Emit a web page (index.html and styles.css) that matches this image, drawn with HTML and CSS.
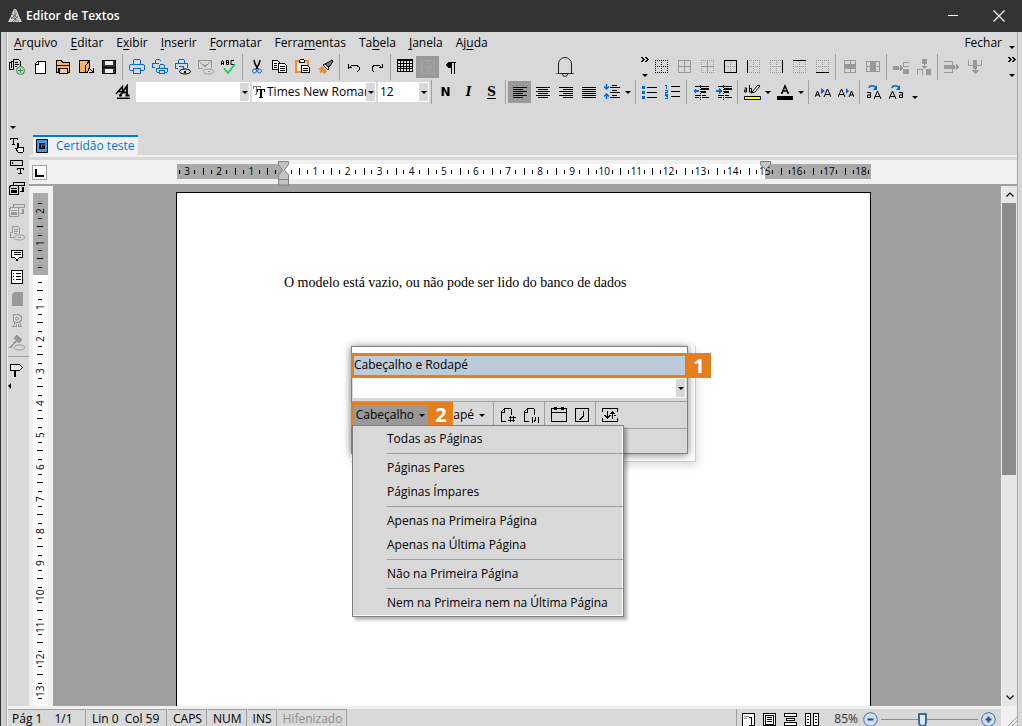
FILE: index.html
```
<!DOCTYPE html>
<html lang="pt-BR">
<head>
	<meta charset="UTF-8">
	<meta name="viewport" content="width=device-width,initial-scale=1.0">
	<title>Editor de Textos</title>
	<link rel="stylesheet" href="styles.css">
</head>
<body>
	<div class="window">
		<header class="titlebar">
			<svg class="logo" width="14" height="14" viewBox="0 0 14 14"><path d="M6 0h2l2 4 1 3 3 6H0l3-6 1-3z" fill="#d0d0d0"/><path d="M4 5l6 4M3 8l8 4M9 4l-6 6M10 7l-6 6M7 1v12" stroke="#555" stroke-width=".7"/></svg>
			<h1>Editor de Textos</h1>
			<button class="winbtn" aria-label="Minimizar"><svg width="12" height="12"><path d="M1 5.5h10" stroke="#fff"/></svg></button>
			<button class="winbtn" aria-label="Fechar janela"><svg width="12" height="12"><path d="M.5.5l11 11M11.5.5l-11 11" stroke="#fff" stroke-width="1.2"/></svg></button>
		</header>

		<div class="frame">
			<nav class="menubar">
				<a href="#"><u>A</u>rquivo</a>
				<a href="#"><u>E</u>ditar</a>
				<a href="#">E<u>x</u>ibir</a>
				<a href="#"><u>I</u>nserir</a>
				<a href="#"><u>F</u>ormatar</a>
				<a href="#">Ferra<u>m</u>entas</a>
				<a href="#">Ta<u>b</u>ela</a>
				<a href="#"><u>J</u>anela</a>
				<a href="#">Aj<u>u</u>da</a>
				<a href="#" class="close">Fechar</a>
				<i class="arrow low"></i>
			</nav>

			<div class="toolbar">
				<button aria-label="Novo a partir de modelo"><svg viewBox="0 0 16 16"><path d="M4.500 10.500H.5v-7h2M2.500 8.500v-6h2M4.500 10.500v-10h5l2 2V7M6 3.500h3M6 5.500h4M6 7.500h2" stroke="#000"/><circle cx="11.500" cy="11.500" r="4" fill="#d8d8d8" stroke="#2b8a3e"/><path d="M11.500 9v5M9 11.500h5" stroke="#2b8a3e"/></svg></button>
				<button aria-label="Novo"><svg viewBox="0 0 16 16"><path d="M5.500 2.500h8v12h-10v-10zM6.500 2.500v3h-3" fill="#fff" stroke="#000"/></svg></button>
				<button aria-label="Abrir"><svg viewBox="0 0 16 16"><path d="M1.500 13.500v-12h5l1 2h7v10h-2v-4h-9v4z" fill="#ffb45a" stroke="#000"/><path d="M4.500 9.500h8v5h-8zM1 6.500h13" fill="#f0d0a0" stroke="#000"/></svg></button>
				<button aria-label="Exportar"><svg viewBox="0 0 16 16"><path d="M1.500 1.500h10v6l-2 6h-8z" fill="#ffb45a" stroke="#000"/><path d="M11.500 2L7.500 6.500v7H4M11 9l4 4m0-4v4h-4" stroke="#000"/></svg></button>
				<button aria-label="Salvar"><svg viewBox="0 0 16 16"><path d="M1.500 1.500h13v13h-13z" fill="#333" stroke="#000"/><path d="M4 2h8v4H4zM4 10h8v4H4z" fill="#eee"/><path d="M1 8.500h14" stroke="#000"/></svg></button>
				<span class="sep"></span>
				<button aria-label="Imprimir"><svg viewBox="0 0 16 16" class="blue"><path d="M4.500 6V1.500l1-1h5l1 1V6M4 11.500H1.500l-1-1v-4l1-1h13l1 1v4l-1 1H12M4.500 9.500h7v5h-7z"/></svg></button>
				<button aria-label="Imprimir v&aacute;rios"><svg viewBox="0 0 16 16" class="blue"><path d="M3.500 4V1.500l1-1h3l2 2M3 8.500H.5v-4h6M7.500 9V6.500l1-1h3l1 1V9M7 13.500H5.500l-1-1v-3h11v3l-1 1H13M7.500 11.500h5v3h-5z"/></svg></button>
				<button aria-label="Visualizar impress&atilde;o"><svg viewBox="0 0 16 16"><g class="blue"><path d="M3.500 5V1.500l1-1h4l1 1V5M3 9.500H.5v-5h12v4M3.500 7.500h5v3"/></g><ellipse cx="10" cy="12.500" rx="5.500" ry="2.500" fill="#d8d8d8" stroke="#000"/><path d="M9 12h2v2H9z" fill="#000"/></svg></button>
				<button aria-label="Enviar" disabled><svg viewBox="0 0 16 16" class="off"><path d="M5 9.500H.5v-8h13v7M.5 1.500l6.500 6 6.500-6"/><ellipse cx="10.500" cy="12.500" rx="5" ry="2.500"/><path d="M9.500 12.500h2"/></svg></button>
				<button aria-label="Verificar ortografia"><svg viewBox="0 0 16 16" class="soft"><path d="M.5 6V3l1-1.500 1 1.500v3M.5 4.500h2M5.500 1.500v4h2v-4h-2m0 2h2M13 1.500h-3v4h3" stroke="#000"/><path d="M3 9.500l4 4.500 7-9" stroke="#10c860" stroke-width="1.600"/></svg></button>
				<span class="sep"></span>
				<button aria-label="Recortar"><svg viewBox="0 0 16 16" class="soft"><path d="M5 1l1 4 3 5M11 1l-1 4-3 5" stroke="#000" stroke-width="1.500"/><circle cx="5.500" cy="12" r="2" stroke="#0068d8"/><circle cx="10.500" cy="12" r="2" stroke="#0068d8"/></svg></button>
				<button aria-label="Copiar"><svg viewBox="0 0 16 16"><path d="M.5 1.500h5l2 2v7h-7zM2 4.500h3M2 6.500h3M2 8.500h3" fill="#fff" stroke="#000"/><path d="M6.500 4.500h6l2 2v7h-8zM8 7.500h5M8 9.500h5M8 11.500h5" fill="#fff" stroke="#000"/></svg></button>
				<button aria-label="Colar"><svg viewBox="0 0 16 16"><path d="M1 2h12v11H1z" fill="#e4e4e4" stroke="#f58a1e" stroke-width="2"/><path d="M4.500 1.500l1-1h3l1 1v2h-5z" fill="#fff" stroke="#000"/><path d="M6.500 6.500h6l2 2v5h-8zM8 9.500h5M8 11.500h5" fill="#fff" stroke="#000"/></svg></button>
				<button aria-label="Pincel"><svg viewBox="0 0 16 16" class="soft"><path d="M9 4l5-3 1 1-3 5-2 1-3-3z" fill="#777" stroke="#000"/><path d="M7 5l4 4-1 2-5-5z" fill="#fff" stroke="#000"/><path d="M4 7l5 5-2 3-2-1 1-2-3 2-2-1 2-2-3 0z" fill="#f58a1e"/></svg></button>
				<span class="sep"></span>
				<button aria-label="Desfazer"><svg viewBox="0 0 16 16"><path d="M2 10V5h1v3h3v1H3z" fill="#000"/><path d="M4 8l2-2h4l3 2v3l-2 2" stroke="#000"/></svg></button>
				<button aria-label="Refazer"><svg viewBox="0 0 16 16"><path d="M14 10V5h-1v3h-3v1h3z" fill="#000"/><path d="M12 8l-2-2H6L3 8v3l2 2" stroke="#000"/></svg></button>
				<span class="sep"></span>
				<button aria-label="Inserir tabela"><svg viewBox="0 0 16 16"><path d="M0 0h16v13H0z" fill="#000"/><path d="M1 2h2v2H1zm3 0h2v2H4zm3 0h2v2H7zm3 0h2v2h-2zm3 0h2v2h-2zM1 5h2v2H1zm3 0h2v2H4zm3 0h2v2H7zm3 0h2v2h-2zm3 0h2v2h-2zM1 8h2v1H1zm3 0h2v1H4zm3 0h2v1H7zm3 0h2v1h-2zm3 0h2v1h-2zM1 10h2v2H1zm3 0h2v2H4zm3 0h2v2H7zm3 0h2v2h-2zm3 0h2v2h-2z" fill="#e4e4e4"/></svg></button>
				<button class="on" aria-label="F&oacute;rmula"><svg viewBox="0 0 16 16"><path d="M1.500 1.500h13v13h-13zM1 7.500h13M7.500 1v13M12 5l-3 4h3l-3 4" stroke="#a4a4a4"/></svg></button>
				<button aria-label="Marcas de par&aacute;grafo"><svg viewBox="0 0 16 16"><path d="M3 5l2-2h8v1h-1v11h-1V4H9v11H8V9H5L3 7z" fill="#000"/></svg></button>

				<button class="bell" aria-label="Avisos"><svg viewBox="0 0 18 22" class="soft"><path d="M2.500 17V8a6.500 6.500 0 0 1 13 0v9M.5 17.500h17M6.500 18a2.500 2.500 0 0 0 5 0" stroke="#222"/></svg></button>

				<span class="more"><svg width="8" height="5" viewBox="0 0 8 5"><path d="M.5 0l2.500 2.500L.5 5M4.500 0L7 2.500 4.500 5" fill="none" stroke="#000" stroke-width="1.500"/></svg><i class="arrow"></i></span>
				<button aria-label="Sem bordas"><svg viewBox="0 0 16 16"><path d="M2 1.500h13M2 13.500h13M2.500 1v13M14.500 1v13M2 7.500h13M8.500 1v13" stroke="#000" stroke-dasharray="1 1"/></svg></button>
				<button aria-label="Todas as bordas"><svg viewBox="0 0 16 16" class="off"><path d="M2.500 1.500h12v12h-12zM2 7.500h12M8.500 1v12"/></svg></button>
				<button aria-label="Bordas internas"><svg viewBox="0 0 16 16" class="off"><path d="M2 1.500h13M2 13.500h13M2.500 1v13M14.500 1v13" stroke-dasharray="1 1"/><path d="M2 7.500h12M8.500 1v12"/></svg></button>
				<button aria-label="Bordas externas"><svg viewBox="0 0 16 16"><path d="M2.500 1.500h12v12h-12z" stroke="#000"/><path d="M4 7.500h9M8.500 3v9" stroke="#999" stroke-dasharray="1 1"/></svg></button>
				<button aria-label="Borda esquerda"><svg viewBox="0 0 16 16"><use href="#grid"/><path d="M2.500 1v13" stroke="#000"/></svg></button>
				<button aria-label="Borda direita"><svg viewBox="0 0 16 16"><use href="#grid"/><path d="M14.500 1v13" stroke="#000"/></svg></button>
				<button aria-label="Borda superior"><svg viewBox="0 0 16 16"><use href="#grid"/><path d="M2 1.500h13" stroke="#000"/></svg></button>
				<button aria-label="Borda inferior"><svg viewBox="0 0 16 16"><use href="#grid"/><path d="M2 13.500h13" stroke="#000"/></svg></button>
				<span class="sep"></span>
				<button aria-label="Linha"><svg viewBox="0 0 16 16" class="off"><path d="M2.500 1.500h11v12h-11zM8 1v12"/><path d="M3 5h10v5H3z" class="fill"/></svg></button>
				<button aria-label="Coluna"><svg viewBox="0 0 16 16" class="off"><path d="M1.500 2.500h13v10h-13zM1 7.500h14"/><path d="M5 2h6v11H5z" class="fill"/></svg></button>
				<span class="sep"></span>
				<button aria-label="Inserir linha"><svg viewBox="0 0 16 16" class="off"><path d="M0 7h6v4H0zM10 10h6v5h-6zM7 6l3 3-3 3z" class="fill"/><path d="M5 9.500h5M16 3.500h-5.500v4H16"/></svg></button>
				<button aria-label="Inserir coluna"><svg viewBox="0 0 16 16" class="off"><path d="M6 0h5v5H6zM10 10h5v6h-5zM5 7h7L8.500 10z" class="fill"/><path d="M8.500 5v3M1.500 16v-5.500h5V16"/></svg></button>
				<span class="sep"></span>
				<button aria-label="Excluir linha"><svg viewBox="0 0 16 16" class="off"><path d="M0 6h11v4H0zM12 5l4 3-4 3z" class="fill"/><path d="M0 2.500h8.500V6M0 13.500h8.500V10M10 8.500h4"/></svg></button>
				<button aria-label="Excluir coluna"><svg viewBox="0 0 16 16" class="off"><path d="M6 1h4v9H6zM5 11h7l-3.500 4z" class="fill"/><path d="M1.500 1v5.500h13V1M8 6v6"/></svg></button>
				<span class="more last"><svg width="8" height="5" viewBox="0 0 8 5"><path d="M.5 0l2.500 2.500L.5 5M4.500 0L7 2.500 4.500 5" fill="none" stroke="#000" stroke-width="1.500"/></svg><i class="arrow"></i></span>
			</div>

			<div class="toolbar format">
				<button aria-label="Estilos"><svg viewBox="0 0 16 16" class="soft"><path d="M1 10L7.500 2.500V7M3.500 7.500H7" stroke="#000" stroke-width="1.400"/><path d="M5 11.500l7-9.500v9.500M8 8.500h4M4 11.500h3M10.500 11.500h4" stroke="#000" stroke-width="1.800"/><path d="M2 14.300h13" stroke="#000" stroke-width="1.400"/></svg></button>
				<label class="combo style"><select aria-label="Estilo"><option></option></select><span class="drop"><i class="arrow"></i></span></label>
				<label class="combo font"><svg width="12" height="12" viewBox="0 0 12 12"><path d="M.5 3V.5h7V2M3.500 1v7M2 8.500h2" stroke="#777"/><path d="M4.500 5.500v-2h7v2M8 3v8M6 11.500h4" stroke="#000"/><path d="M7 4h2v7H7z" fill="#000"/></svg><select aria-label="Fonte"><option>Times New Roman</option></select><span class="drop"><i class="arrow"></i></span></label>
				<label class="combo size"><select aria-label="Tamanho"><option>12</option></select><span class="drop"><i class="arrow"></i></span></label>
				<span class="sep"></span>
				<button class="glyph" aria-label="Negrito">N</button>
				<button class="glyph italic" aria-label="It&aacute;lico">I</button>
				<button class="glyph under" aria-label="Sublinhado">S</button>
				<span class="sep"></span>
				<button class="on" aria-label="Alinhar &agrave; esquerda"><svg viewBox="0 0 16 16"><path d="M1 3.500h14M1 5.500h10M1 7.500h14M1 9.500h10M1 11.500h14M1 13.500h10" stroke="#000"/></svg></button>
				<button aria-label="Centralizar"><svg viewBox="0 0 16 16"><path d="M1 3.500h14M3 5.500h10M1 7.500h14M3 9.500h10M1 11.500h14M3 13.500h10" stroke="#000"/></svg></button>
				<button aria-label="Alinhar &agrave; direita"><svg viewBox="0 0 16 16"><path d="M1 3.500h14M5 5.500h10M1 7.500h14M5 9.500h10M1 11.500h14M5 13.500h10" stroke="#000"/></svg></button>
				<button aria-label="Justificar"><svg viewBox="0 0 16 16"><path d="M1 3.500h14M1 5.500h14M1 7.500h14M1 9.500h14M1 11.500h14M1 13.500h14" stroke="#000"/></svg></button>
				<button aria-label="Espa&ccedil;amento"><svg viewBox="0 0 16 16" class="soft"><path d="M2.500 0v5M0 2.500L2.500 5 5 2.500M2.500 15v-5M0 12.500L2.500 10 5 12.500" stroke="#0068d8" stroke-width="1.500"/><path d="M8 1.500h5M6 3.500h10M8 6.500h5M6 8.500h10M8 11.500h5M6 13.500h10" stroke="#000"/></svg></button>
				<button class="mini" aria-label="Op&ccedil;&otilde;es de espa&ccedil;amento"><i class="arrow"></i></button>
				<span class="sep"></span>
				<button aria-label="Marcadores"><svg viewBox="0 0 16 16"><path d="M0 2h3v3H0zM0 7h3v3H0zM0 12h3v3H0z" fill="#0068d8"/><path d="M5 3.500h10M5 8.500h10M5 13.500h10" stroke="#000"/></svg></button>
				<button aria-label="Numera&ccedil;&atilde;o"><svg viewBox="0 0 16 16"><path d="M0 1.500h1.500V5M0 6.500h2.500v1.500H.5v2h2M0 11.500h2.500v3H0m1-2h1" stroke="#0068d8"/><path d="M6 2.500h9M6 7.500h9M6 12.500h9" stroke="#000"/></svg></button>
				<span class="sep"></span>
				<button aria-label="Diminuir recuo"><svg viewBox="0 0 16 16"><use href="#indent"/><path d="M0 7l3-3v2h3v2H3v2z" fill="#0068d8"/></svg></button>
				<button aria-label="Aumentar recuo"><svg viewBox="0 0 16 16"><use href="#indent"/><path d="M6 7L3 4v2H0v2h3v2z" fill="#0068d8"/></svg></button>
				<span class="sep"></span>
				<button aria-label="Real&ccedil;ar"><svg viewBox="0 0 18 16" class="wide soft"><path d="M1.500 4h2v4h-2V6h2M6.500 1v7h2V4.500h-2" stroke="#000"/><path d="M10 7l5-6 2 1-5 6-4 1z" fill="#fff" stroke="#000"/><path d="M1.500 12.500h16v3h-16z" fill="#ff0" stroke="#000"/></svg></button>
				<button class="mini" aria-label="Cores de realce"><i class="arrow"></i></button>
				<button aria-label="Cor da fonte"><svg viewBox="0 0 18 16" class="wide soft"><path d="M6 9l3-7 3 7M7 7h4M5 9h2M11 9h2" stroke="#000" stroke-width="1.500"/><path d="M1 12h16v4H1z" fill="#000"/></svg></button>
				<button class="mini" aria-label="Cores da fonte"><i class="arrow"></i></button>
				<span class="sep"></span>
				<button aria-label="Aumentar fonte"><svg viewBox="0 0 16 16" class="soft"><path d="M0 13l2.500-6L5 13M1 11h3M9 13l3.500-8L16 13M10 10.500h5" stroke="#000"/><path d="M6 4l4 3-4 3z" fill="#0068d8"/></svg></button>
				<button aria-label="Diminuir fonte"><svg viewBox="0 0 16 16" class="soft"><path d="M0 13l3.500-8L7 13M1 10.500h5M11 13l2.500-6 2.500 6M12 11h3" stroke="#000"/><path d="M8 4l3 3-3 3z" fill="#0068d8"/></svg></button>
				<span class="sep"></span>
				<button aria-label="Mai&uacute;sculas"><svg viewBox="0 0 16 16" class="soft"><path d="M3 4c0-3 6-3 7 0" stroke="#0068d8" stroke-width="1.400"/><path d="M11 1v5H7z" fill="#0068d8"/><path d="M1 8.500h3.500v5h-3v-2.500h3M8 15l3.500-8L15 15M9 12.500h5" stroke="#000"/></svg></button>
				<button aria-label="Min&uacute;sculas"><svg viewBox="0 0 16 16" class="soft"><path d="M3 4c0-3 6-3 7 0" stroke="#0068d8" stroke-width="1.400"/><path d="M11 1v5H7z" fill="#0068d8"/><path d="M0 15l3.500-8L7 15M1 12.500h5M10 8.500h3.500v5h-3v-2.500h3" stroke="#000"/></svg></button>
				<i class="arrow end"></i>
			</div>

			<div class="main">
				<aside class="toolbox">
					<i class="arrow"></i>
					<button aria-label="Campo de texto"><svg viewBox="0 0 16 16"><path d="M1 3V1.500h7V3M4.500 1v6M3 7.500h3" stroke="#000"/><path d="M8.500 11V6.500h1V10l5 1v3l-1 1.500h-4l-3-4z" fill="#eee" stroke="#000"/></svg></button>
					<button aria-label="Caixa de texto"><svg viewBox="0 0 16 16"><path d="M1.500 1.500h12v5h-12zM3.500 3v2M8 11V9.500h6V11M11 9v6M9 14.500h4" stroke="#000"/></svg></button>
					<button aria-label="Formul&aacute;rio"><svg viewBox="0 0 16 16"><use href="#form"/></svg></button>
					<button aria-label="Editar formul&aacute;rio" disabled><svg viewBox="0 0 16 16" class="grey"><use href="#form"/></svg></button>
					<button aria-label="Ver documento" disabled><svg viewBox="0 0 16 16" class="off"><path d="M5 12.500H1.500v-5h2v-6h5l2 2V9M5 4.500h4M5 6.500h4M5 8.500h3"/><ellipse cx="10.500" cy="12.500" rx="5" ry="2.500"/><path d="M9 12.500h3"/></svg></button>
					<button aria-label="Coment&aacute;rio"><svg viewBox="0 0 16 16"><path d="M2.500 3.500h11v7h-3l-2.500 3-2.500-3h-3zM5 5.500h7M5 7.500h7" fill="#fff" stroke="#000"/></svg></button>
					<button aria-label="Lista"><svg viewBox="0 0 16 16"><path d="M2.500 1.500h11v13h-11z" fill="#fff" stroke="#000"/><path d="M4 4.500h1M7 4.500h5M4 7.500h1M7 7.500h5M4 10.500h1M7 10.500h5" stroke="#000"/></svg></button>
					<button aria-label="P&aacute;gina" disabled><svg viewBox="0 0 16 16"><path d="M5 1h9v14H3V3z" fill="#999"/></svg></button>
					<button aria-label="Certificado" disabled><svg viewBox="0 0 16 16" class="off"><path d="M5 1.500h5l2 2v4l-2 2H6l-2-2v-4zM5 10v2l-1 1.500h3v-3M11 10v2l1 1.500H9v-3"/><circle cx="8" cy="5.500" r="1.500"/></svg></button>
					<button aria-label="Assinatura" disabled><svg viewBox="0 0 16 16" class="off"><path d="M4 3l4-3 5 5-3 3z" class="fill"/><path d="M7 6l-6 7" stroke-width="2"/><ellipse cx="10.500" cy="12.500" rx="5" ry="2.500"/></svg></button>
					<span class="rule"></span>
					<button aria-label="Sinalizador"><svg viewBox="0 0 16 16"><path d="M1.500 2.500h9l3 3-3 3h-9z" fill="#e8e8e8" stroke="#000"/><path d="M6 9v6" stroke="#000" stroke-width="2"/></svg></button>
					<i class="arrow left"></i>
				</aside>

				<section class="editor">
					<div class="tabs">
						<a href="#" class="tab">
							<svg width="12" height="14" viewBox="0 0 12 14"><path d="M.5.5h11v13H.5z" fill="#3d9be9" stroke="#000"/><path d="M3 4h6v1.500H5v3h2.500V8H6V6.500h3V10H3z" fill="#000"/></svg>
							Certid&atilde;o teste
						</a>
					</div>

					<div class="rulerbar">
						<button class="tabstop" aria-label="Tabula&ccedil;&atilde;o"><svg width="9" height="9"><path d="M1 1v7h8" fill="none" stroke="#000" stroke-width="2"/></svg></button>
						<div class="hruler">
							<div class="cells">
								<span class="out">3</span><span class="out">2</span><span class="out">1</span>
								<span class="zero"><svg class="mark" width="11" height="25" viewBox="0 0 11 25"><path d="M.5.500h10v3l-4 5.500 4 5v10H.5v-10l4-5-4-5.500zM.5 18.500h10" fill="#c4c4c4" stroke="#808080"/></svg></span>
								<span>1</span><span>2</span><span>3</span><span>4</span><span>5</span><span>6</span><span>7</span><span>8</span><span>9</span><span>10</span><span>11</span><span>12</span><span>13</span><span>14</span>
								<span class="limit">15<svg class="mark" width="11" height="25" viewBox="0 0 11 25"><path d="M.5.500h10v3l-5 5-5-5z" fill="#c4c4c4" stroke="#808080"/></svg></span>
								<span class="out">16</span><span class="out">17</span><span class="out">18</span>
							</div>
						</div>
					</div>

					<div class="workspace">
						<div class="vruler">
							<div class="vcells">
								<span class="out">2</span><span class="out">1</span><span class="zero"></span>
								<span>1</span><span>2</span><span>3</span><span>4</span><span>5</span><span>6</span><span>7</span><span>8</span><span>9</span><span>10</span><span>11</span><span>12</span><span>13</span>
							</div>
						</div>
						<div class="canvas">
							<article class="page">
								<p>O modelo est&aacute; vazio, ou n&atilde;o pode ser lido do banco de dados</p>
							</article>
						</div>
						<div class="scrollbar">
							<button aria-label="Rolar para cima"><svg width="8" height="5"><path d="M.5 4.500L4 1l3.500 3.500" fill="none" stroke="#000" stroke-width="1.200"/></svg></button>
							<span class="thumb"></span>
							<span class="track"></span>
							<button aria-label="Rolar para baixo"><svg width="8" height="5"><path d="M.5.500L4 4 7.500.5" fill="none" stroke="#000" stroke-width="1.200"/></svg></button>
						</div>
					</div>
				</section>
			</div>

			<footer class="status">
				<span class="cell pages"><span>P&aacute;g 1</span><span>1/1</span></span>
				<span class="cell line"><span>Lin 0</span><span>Col 59</span></span>
				<span class="cell">CAPS</span>
				<span class="cell">NUM</span>
				<span class="cell">INS</span>
				<span class="cell off-text">Hifenizado</span>
				<div class="views">
					<button aria-label="Normal"><svg width="13" height="14" viewBox="0 0 13 14"><path d="M.5.5h12v13H.5z" fill="#fff" stroke="#000"/><path d="M2 3.500h5M2 5.500h3" stroke="#888"/><path d="M7 4.500h2.500V12M7 12.500h5" stroke="#000"/></svg></button>
					<button aria-label="P&aacute;gina inteira"><svg width="13" height="14" viewBox="0 0 13 14"><path d="M.5.5h12v12H.5zM2.500 2.500h8v9h-8zM4 4.500h5M4 6.500h5M4 8.500h5" fill="#fff" stroke="#000"/></svg></button>
					<button aria-label="Largura"><svg width="13" height="14" viewBox="0 0 13 14"><path d="M.5 0v3.500h12V0M.5 12.500v-3h12v3zM2.500 5.500h8v2h-8zM0 .5h13" fill="#fff" stroke="#000"/></svg></button>
					<button aria-label="Duas p&aacute;ginas"><svg width="15" height="14" viewBox="0 0 15 14"><path d="M.5.5h5v12h-5zM8.500.5h5v12h-5zM2 3.500h2M2 6.500h2M2 9.500h2M10 3.500h2M10 6.500h2M10 9.500h2" fill="#fff" stroke="#000"/></svg></button>
				</div>
				<label class="zoom" for="zoom">85%</label>
				<button class="round" aria-label="Reduzir"><svg width="15" height="15" viewBox="0 0 15 15"><circle cx="7.500" cy="7.500" r="6.800" fill="#cfe0f5" stroke="#4a6a9c"/><path d="M4.500 7.500h6" stroke="#26497f" stroke-width="2"/></svg></button>
				<input type="range" id="zoom" min="0" max="200" value="85">
				<button class="round" aria-label="Ampliar"><svg width="15" height="15" viewBox="0 0 15 15"><circle cx="7.500" cy="7.500" r="6.800" fill="#cfe0f5" stroke="#4a6a9c"/><path d="M4.500 7.500h6M7.500 4.500v6" stroke="#26497f" stroke-width="2"/></svg></button>
				<span class="grip"><svg width="9" height="9"><path d="M0 9l9-9M4 9l5-5" stroke="#999"/></svg></span>
			</footer>
		</div>
	</div>

	<!-- floating "Cabeçalho e Rodapé" window -->
	<div class="floating">
		<section class="dialog">
			<h2>Cabe&ccedil;alho e Rodap&eacute;</h2>
			<label class="combo wide"><select aria-label="Modelo"><option></option></select><span class="drop"><i class="arrow"></i></span></label>
			<div class="tools">
				<button class="text picked">Cabe&ccedil;alho <i class="arrow"></i></button>
				<button class="text">Rodap&eacute; <i class="arrow"></i></button>
				<span class="sep"></span>
				<button aria-label="N&uacute;mero da p&aacute;gina"><svg viewBox="0 0 16 16"><use href="#leaf"/><path d="M10.500 9v6M13.500 9v6M9 10.500h7M8 13.500h7" stroke="#000"/></svg></button>
				<button aria-label="P&aacute;gina de total"><svg viewBox="0 0 16 16"><use href="#leaf"/><path d="M9.500 10v6M12.500 10v2l-1 3M15.500 10v6" stroke="#000"/></svg></button>
				<span class="sep"></span>
				<button aria-label="Data"><svg viewBox="0 0 16 16"><path d="M.5 1.500h15v13H.5zM0 5.500h16" stroke="#000"/><path d="M3 0h3v3H3zM10 0h3v3h-3z" fill="#000"/></svg></button>
				<button aria-label="Hora"><svg viewBox="0 0 16 16"><path d="M1.500 1.500h13v13h-13zM9.500 4v5l-4 4" stroke="#000"/></svg></button>
				<span class="sep"></span>
				<button aria-label="Altura"><svg viewBox="0 0 16 16"><path d="M.5 5V1.500h15V5M.5 11v3.500h15V11M2 8.500h2M7 8.500h2M12 8.500h2M5.500 4v7M10.500 5v7" stroke="#000"/><path d="M3 9h5l-2.500 3zM8 7h5l-2.500-3z" fill="#000"/></svg></button>
			</div>
		</section>
		<span class="badge one">1</span>
		<span class="badge two">2</span>
		<ul class="menu">
			<li><a href="#">Todas as P&aacute;ginas</a></li>
			<li class="group"><a href="#">P&aacute;ginas Pares</a></li>
			<li><a href="#">P&aacute;ginas &Iacute;mpares</a></li>
			<li class="group"><a href="#">Apenas na Primeira P&aacute;gina</a></li>
			<li><a href="#">Apenas na &Uacute;ltima P&aacute;gina</a></li>
			<li class="group"><a href="#">N&atilde;o na Primeira P&aacute;gina</a></li>
			<li class="group"><a href="#">Nem na Primeira nem na &Uacute;ltima P&aacute;gina</a></li>
		</ul>
	</div>

	<svg class="defs" width="0" height="0">
		<symbol id="grid" viewBox="0 0 16 16"><path d="M2 1.500h13M2 13.500h13M2.500 1v13M14.500 1v13M2 7.500h13M8.500 1v13" stroke="#999" stroke-dasharray="1 1" fill="none"/></symbol>
		<symbol id="indent" viewBox="0 0 16 16"><path d="M2 2.500h14M2 11.500h5M2 13.500h4M9 11.500h4M9 13.500h7" stroke="#000"/><path d="M8 4h8v2H8zM8 7h5v2H8z" fill="#000"/><path d="M7.500 1v15" stroke="#000" stroke-dasharray="1 1"/></symbol>
		<symbol id="form" viewBox="0 0 16 16"><path d="M4 4.500V1.500h11.500v3H6M.5 13.500v-8l2-1h7v9z" fill="none" stroke="currentColor"/><path d="M2 7h6v1H2zM2 9h6v3H2zM13 6h2v5h-4v-1h2z" fill="currentColor"/></symbol>
		<symbol id="leaf" viewBox="0 0 16 16"><path d="M6 14.500H1.500v-10l3-3h6l1 1V8M4.500 2v3H2" fill="none" stroke="#000"/></symbol>
	</svg>
</body>
</html>
```

FILE: styles.css
```
*{margin: 0; padding: 0; box-sizing: border-box;}
body{font: 12px/16px "Open Sans", "Noto Sans", sans-serif; color: #000; background: #d8d8d8; overflow: hidden;}
a{color: inherit; text-decoration: none;}
ul{list-style: none;}
button{border: 0; background: none; font: inherit; color: inherit;}
select{appearance: none; border: 0; border-radius: 0; background: #fff; font: inherit; color: #000;}
.defs{position: absolute;}

.window{height: 100vh; display: flex; flex-direction: column;}

.titlebar{height: 32px; flex: none; display: flex; align-items: center; background: #333; color: #fff; padding: 0 0 0 8px;}
.titlebar h1{flex: 1; font-size: 12px; font-weight: 600; margin-left: 4px;}
.winbtn{width: 46px; height: 32px; display: flex; align-items: center; justify-content: center;}

.frame{flex: 1; min-height: 0; display: flex; flex-direction: column; border-left: 1px solid #333; border-right: 4px solid #d8d8d8; padding: 0 1px 0 7px; box-shadow: inset 5px 0 #d0d0d0, inset 6px 0 #aaa, inset 7px 0 #f4f4f4, inset -1px 0 #aaa;}

.arrow{display: block; width: 0; height: 0; border: 3px solid transparent; border-top-color: #000; border-bottom: 0;}
.arrow.left{border: 3px solid transparent; border-right-color: #000; border-left: 0;}

.menubar{height: 22px; flex: none; display: flex; align-items: center; gap: 13px; padding-left: 6px;}
.menubar u{text-underline-offset: 2px;}
.menubar .close{margin-left: auto;}
.menubar .low{margin: 8px 2px 0 -6px;}

.toolbar{height: 26px; flex: none; display: flex; align-items: center; margin-left: -3px;}
.toolbar button{width: 23px; height: 22px; flex: none; display: flex; align-items: center; justify-content: center;}
.toolbar svg, .tools svg, .toolbox svg{fill: none; shape-rendering: crispEdges;}
.toolbar button svg, .tools button svg, .toolbox button svg{width: 16px; height: 16px;}
.toolbar button svg.wide{width: 18px;}
.toolbar svg.soft, .toolbar .bell svg{shape-rendering: auto;}
circle, ellipse{shape-rendering: auto;}
.toolbar button.on{background: #999;}
.toolbar button.mini{width: 10px;}
.sep{width: 5px; flex: none; align-self: stretch; background: linear-gradient(#a0a0a0, #a0a0a0) 2px 0/1px 100% no-repeat;}
.toolbar .bell{width: 28px; height: 26px; margin: 0 62px 0 auto;}
.toolbar .bell svg{width: 18px; height: 22px;}
.more{height: 20px; flex: none; display: flex; flex-direction: column; justify-content: space-between; align-items: center;}
.more.last{margin: 0 1px 0 22px;}
.blue{stroke: #0068d8;}
.off{stroke: #999;}
.off .fill{fill: #999; stroke: none;}
.grey{color: #999;}

.format{height: 24px; padding-left: 106px;}
.combo{height: 20px; display: flex; align-items: center; background: #fff;}
.combo svg{flex: none;}
.combo select{flex: 1; min-width: 0; height: 20px; padding-left: 2px; overflow: hidden;}
.drop{width: 9px; height: 18px; margin-right: 1px; flex: none; display: flex; align-items: center; justify-content: center; background: #d8d8d8;}
.combo.style{width: 114px; margin: 0 2px;}
.combo.font{width: 124px; padding-left: 1px; margin-right: 2px;}
.combo.size{width: 51px;}
.toolbar .glyph{font: bold 12px/20px "DejaVu Sans", sans-serif;}
.toolbar .italic{font-family: "DejaVu Serif", serif; font-style: italic;}
.toolbar .under{font-family: "DejaVu Serif", serif; text-decoration: underline; text-underline-offset: 2px;}
.end{margin: 10px 0 0 4px;}

.main{flex: 1; min-height: 0; display: flex; margin-top: 16px;}
.toolbox{width: 21px; flex: none; display: flex; flex-direction: column; align-items: flex-start;}
.toolbox button{width: 19px; height: 22px; flex: none; display: flex; align-items: center; padding-left: 1px;}
.toolbox .arrow{margin: 6px 0 5px 2px;}
.toolbox .rule{width: 21px; height: 1px; margin: 2px 0; background: #a0a0a0;}
.toolbox .arrow.left{margin: 2px 0;}

.editor{flex: 1; min-width: 0; display: flex; flex-direction: column; padding-top: 15px;}
.tabs{height: 22px; flex: none; display: flex; padding-left: 4px; border-bottom: 2px solid #f0f0f0;}
.tab{display: flex; align-items: center; gap: 8px; padding: 0 3px 1px 3px; border-top: 2px solid #0078d7; background: #f0f0f0; color: #0078d7;}
.rulerbar{height: 26px; flex: none; display: flex; align-items: center; margin-top: 3px; background: #f0f0f0; border-bottom: 2px solid #a0a0a0;}
.tabstop{width: 15px; height: 15px; flex: none; display: flex; align-items: center; justify-content: center; margin: 0 6px 0 3px; background: #fff; border: 1px solid #a0a0a0;}

/* same side paddings as .canvas, so that the scale follows the page */
.hruler{flex: 1; min-width: 0; padding: 0 146px 1px 124px;}
.cells{display: flex; height: 15px; overflow-x: clip;}
.cells span{flex: 1; min-width: 0; position: relative; font-size: 10px; line-height: 14px; text-align: center; background-color: #fff; background-image: linear-gradient(#000, #000), linear-gradient(#000, #000), linear-gradient(#000, #000); background-size: 1px 7px, 1px 4px, 1px 4px; background-position: 0 50%, 25% 50%, 75% 50%; background-repeat: no-repeat;}
.cells span:first-child{margin-left: -6px;}
.cells span:last-child{margin-right: -6px;}
.cells .out, .vcells .out{background-color: #aaa;}
.cells .zero{background-image: linear-gradient(#000, #000), linear-gradient(#000, #000), linear-gradient(#000, #000), linear-gradient(90deg, #aaa 50%, #fff 50%); background-size: 1px 7px, 1px 4px, 1px 4px, 100% 100%;}
.cells .limit{background-image: linear-gradient(#000, #000), linear-gradient(#000, #000), linear-gradient(#000, #000), linear-gradient(90deg, #fff 50%, #aaa 50%); background-size: 1px 7px, 1px 4px, 1px 4px, 100% 100%;}
.mark{position: absolute; top: -3px; left: 50%; margin-left: -5px;}

.workspace{flex: 1; min-height: 0; display: flex;}
.vruler{width: 24px; flex: none; overflow: hidden; padding: 7px 5px 0 4px; background: #f0f0f0;}
.vcells{background: #fff; border-top: 2px solid #aaa;}
.vcells span{display: block; width: 15px; height: 32px; writing-mode: vertical-rl; transform: rotate(180deg); font-size: 10px; line-height: 15px; text-align: center; background-color: #fff; background-image: linear-gradient(#000, #000), linear-gradient(#000, #000), linear-gradient(#000, #000); background-size: 6px 1px, 4px 1px, 4px 1px; background-position: 50% 0, 50% 25%, 50% 75%; background-repeat: no-repeat;}
.vcells .out{background-color: #aaa;}
.vcells .zero{background-image: linear-gradient(#000, #000), linear-gradient(#000, #000), linear-gradient(#000, #000), linear-gradient(#fff 50%, #aaa 50%); background-size: 6px 1px, 4px 1px, 4px 1px, 100% 100%;}

.canvas{flex: 1; min-width: 0; display: flex; padding: 6px 130px 0 123px; background: #a0a0a0;}
.page{flex: 1; min-width: 0; border: 1px solid #000; border-bottom: 0; background: #fff; padding: 80px 106px 0 107px; font: 14px/20px "Liberation Serif", serif;}
.scrollbar{width: 16px; flex: none; display: flex; flex-direction: column; background: #e6e6e6; border-left: 1px solid #f0f0f0;}
.scrollbar button{height: 17px; flex: none; display: flex; align-items: center; justify-content: center;}
.thumb{flex: 56; margin-right: 1px; background: #8a8a8a;}
.track{flex: 44;}

.status{height: 20px; flex: none; display: flex; align-items: flex-start; overflow: hidden; border-top: 3px solid #f0f0f0;}
.status .cell{height: 20px; flex: none; display: flex; padding: 1px 4px 0 5px; border: 1px solid #a0a0a0; border-width: 1px 1px 0 0; margin-right: 1px;}
.status .pages{width: 78px; gap: 12px; padding-left: 4px;}
.status .line{width: 80px; gap: 6px;}
.status .off-text{color: #8c8c8c;}
.status button{flex: none; display: flex;}
.views{height: 20px; display: flex; gap: 8px; margin-left: auto; padding: 4px 0 0 5px; border-left: 1px solid #a0a0a0;}
.views svg{fill: none; shape-rendering: crispEdges;}
.zoom{margin: 2px 5px 0 14px; color: #333;}
.round{margin-top: 3px;}
#zoom{width: 97px; height: 18px; margin: 2px 3px 0; appearance: none; background: linear-gradient(#6a93c4, #6a93c4) 0 8px/100% 1px no-repeat;}
#zoom::-webkit-slider-thumb{appearance: none; width: 9px; height: 14px; background: #dbe8f8; border: 2px solid #3f6797; border-radius: 1px 1px 5px 5px;}
.grip{width: 16px; height: 20px; display: flex; justify-content: flex-end; padding-top: 8px; margin-left: 5px; background: #f0f0f0;}

.floating{position: absolute; left: 351px; top: 346px; width: 345px; height: 116px; border: 1px solid #ccc; border-width: 0 1px 1px 0; box-shadow: 2px 4px 8px rgba(0,0,0,.12);}
.dialog{width: 337px; height: 108px; padding-top: 6px; background: linear-gradient(#fff 8px, #d8d8d8 8px); border: 1px solid #808080; box-shadow: 0 1px 8px rgba(0,0,0,.5);}
.dialog h2{height: 25px; margin: 0 -1px; font-size: 12px; font-weight: 400; line-height: 18px; background: #bccbda; border: 3px solid #e57f1c;}
.combo.wide{margin: 0 1px;}
.tools{height: 28px; display: flex; align-items: center; margin-top: 3px; border: 1px solid #a0a0a0; border-width: 1px 0;}
.tools button{width: 23px; height: 22px; flex: none; display: flex; align-items: center; justify-content: center;}
.tools .text{width: 60px; gap: 5px; justify-content: flex-end; padding-right: 6px;}
.tools .picked{width: 80px; height: 26px; margin: 0 0 0 -1px; padding-right: 3px; background: #999; border: 3px solid #e57f1c;}
.badge{position: absolute; width: 24px; height: 25px; background: #e57f1c; color: #fff; font-size: 20px; font-weight: 700; line-height: 25px; text-align: center;}
.badge.one{left: 336px; top: 7px;}
.badge.two{left: 78px; top: 56px;}
.menu{position: absolute; left: 1px; top: 79px; width: 272px; padding: 1px 0 1px 34px; background: #d8d8d8; border: 1px solid #808080; box-shadow: inset -1px -1px #fff, 3px 3px 3px rgba(0,0,0,.3);}
.menu a{display: block; height: 24px; line-height: 24px; white-space: nowrap;}
.menu .group{border-top: 1px solid #a0a0a0; margin-top: 2px; padding-top: 2px;}
```
